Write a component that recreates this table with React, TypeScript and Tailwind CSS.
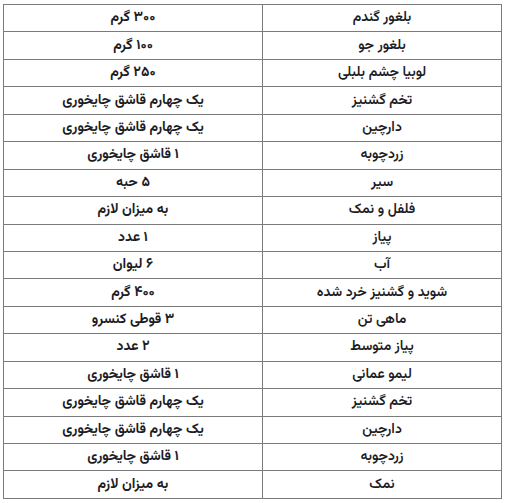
import React from "react";

const rows: [string, string][] = [
  ["بلغور گندم", "۳۰۰ گرم"],
  ["بلغور جو", "۱۰۰ گرم"],
  ["لوبیا چشم بلبلی", "۲۵۰ گرم"],
  ["تخم گشنیز", "یک چهارم قاشق چایخوری"],
  ["دارچین", "یک چهارم قاشق چایخوری"],
  ["زردچوبه", "۱ قاشق چایخوری"],
  ["سیر", "۵ حبه"],
  ["فلفل و نمک", "به میزان لازم"],
  ["پیاز", "۱ عدد"],
  ["آب", "۶ لیوان"],
  ["شوید و گشنیز خرد شده", "۴۰۰ گرم"],
  ["ماهی تن", "۳ قوطی کنسرو"],
  ["پیاز متوسط", "۲ عدد"],
  ["لیمو عمانی", "۱ قاشق چایخوری"],
  ["تخم گشنیز", "یک چهارم قاشق چایخوری"],
  ["دارچین", "یک چهارم قاشق چایخوری"],
  ["زردچوبه", "۱ قاشق چایخوری"],
  ["نمک", "به میزان لازم"],
];

const App = () => {
  return (
    <div className="w-[507px] h-[503px] bg-white pt-[4px] pl-[3px]">
      <table
        dir="rtl"
        className="w-[499px] border-collapse text-[#1c1c24] text-[14px] leading-none"
        style={{ fontFamily: '"Vazirmatn", "DejaVu Sans", sans-serif' }}
      >
        <tbody>
          {rows.map(([name, amount], i) => (
            <tr key={i} className="h-[27.45px]">
              <td className="w-[239px] border border-[#7b7b7b] text-center font-semibold p-0">
                {name}
              </td>
              <td className="border border-[#7b7b7b] text-center font-bold p-0">
                {amount}
              </td>
            </tr>
          ))}
        </tbody>
      </table>
    </div>
  );
};

export default App;
